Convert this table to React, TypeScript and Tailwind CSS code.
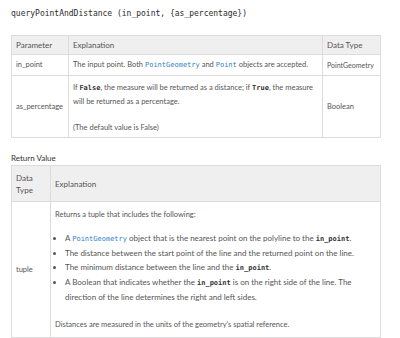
const code = 'font-["DejaVu_Sans_Mono",monospace]';

function Code({ children, link }: { children: React.ReactNode; link?: boolean }) {
  return (
    <code
      className={`font-["DejaVu_Sans_Mono",monospace] text-[7px] ${
        link ? 'text-[#2f81c7]' : 'text-[#333] font-semibold'
      }`}
    >
      {children}
    </code>
  );
}

export default function App() {
  return (
    <div className="w-[400px] h-[338px] bg-white font-['Lato',sans-serif] text-[#555] pl-[11px] pt-[8px] overflow-hidden">
      <h1 className={`${code} text-[8px] leading-[12px] text-[#2b2b2b]`}>
        queryPointAndDistance (in_point, &#123;as_percentage&#125;)
      </h1>

      <table className="mt-[15px] w-[369px] border-collapse border border-[#dcdcdc] text-[7.5px] table-fixed">
        <colgroup>
          <col className="w-[57px]" />
          <col className="w-[254px]" />
          <col className="w-[58px]" />
        </colgroup>
        <thead>
          <tr className="bg-[#efefef] h-[19px]">
            <th className="border border-[#dcdcdc] px-[4px] text-left font-normal text-[8px]">Parameter</th>
            <th className="border border-[#dcdcdc] px-[4px] text-left font-normal text-[8px]">Explanation</th>
            <th className="border border-[#dcdcdc] px-[4px] text-left font-normal text-[8px]">Data Type</th>
          </tr>
        </thead>
        <tbody>
          <tr className="h-[21px]">
            <td className="border border-[#dcdcdc] px-[4px]">in_point</td>
            <td className="border border-[#dcdcdc] px-[4px] whitespace-nowrap">
              The input point. Both <Code link>PointGeometry</Code> and <Code link>Point</Code> objects are accepted.
            </td>
            <td className="border border-[#dcdcdc] px-[4px] whitespace-nowrap text-[7px]">PointGeometry</td>
          </tr>
          <tr>
            <td className="border border-[#dcdcdc] px-[4px]">as_percentage</td>
            <td className="border border-[#dcdcdc] px-[4px] pt-[5px] pb-[3px] leading-[13px]">
              <p>
                If <Code>False</Code>, the measure will be returned as a distance; if <Code>True</Code>, the measure will be returned as a percentage.
              </p>
              <p className="mt-[13px]">(The default value is False)</p>
            </td>
            <td className="border border-[#dcdcdc] px-[4px]">Boolean</td>
          </tr>
        </tbody>
      </table>

      <h2 className="mt-[14px] text-[8px] leading-[12px] text-[#333]">Return Value</h2>

      <table className="mt-[1px] w-[369px] border-collapse border border-[#dcdcdc] text-[8px] table-fixed">
        <colgroup>
          <col className="w-[39px]" />
          <col className="w-[330px]" />
        </colgroup>
        <thead>
          <tr className="bg-[#efefef] h-[36px]">
            <th className="border border-[#dcdcdc] px-[4px] text-left font-normal text-[8px] leading-[12px]">
              Data Type
            </th>
            <th className="border border-[#dcdcdc] px-[4px] text-left font-normal text-[8px]">Explanation</th>
          </tr>
        </thead>
        <tbody>
          <tr>
            <td className="border border-[#dcdcdc] px-[4px] text-[7.5px]">tuple</td>
            <td className="border border-[#dcdcdc] px-[4px] pt-[6px] pb-[5px] leading-[14px]">
              <p className="text-[7.5px]">Returns a tuple that includes the following:</p>
              <ul className="mt-[9px] pl-[10px] list-disc">
                <li>
                  A <Code link>PointGeometry</Code> object that is the nearest point on the polyline to the <Code>in_point</Code>.
                </li>
                <li>The distance between the start point of the line and the returned point on the line.</li>
                <li>
                  The minimum distance between the line and the <Code>in_point</Code>.
                </li>
                <li>
                  A Boolean that indicates whether the <Code>in_point</Code> is on the right side of the line. The direction of the line determines the right and left sides.
                </li>
              </ul>
              <p className="mt-[14px] text-[7.5px]">Distances are measured in the units of the geometry's spatial reference.</p>
            </td>
          </tr>
        </tbody>
      </table>
    </div>
  );
}
